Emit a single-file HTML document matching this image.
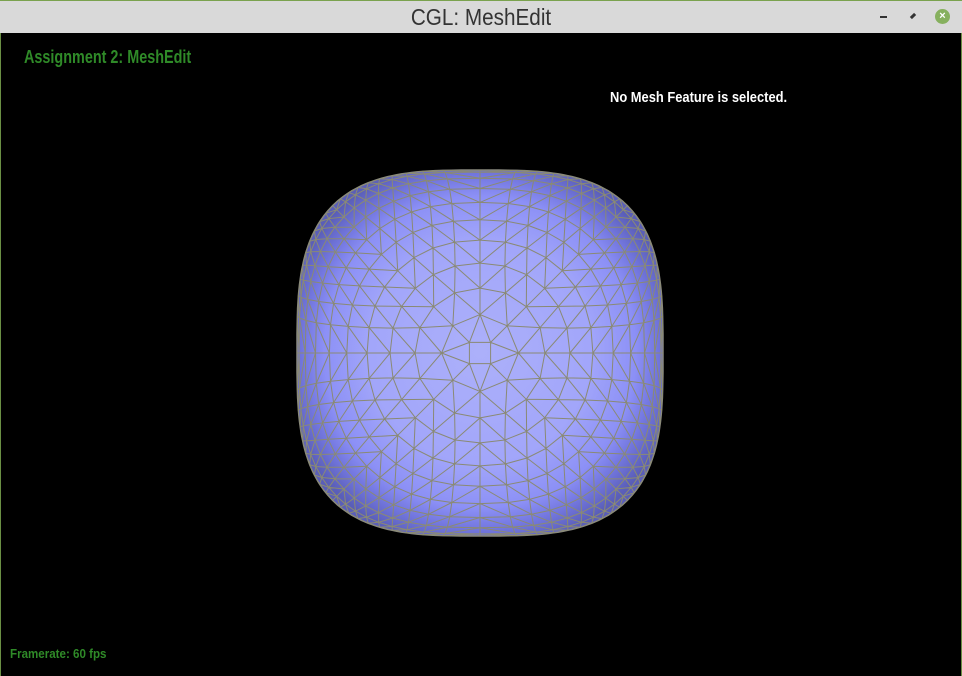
<!DOCTYPE html>
<html><head><meta charset="utf-8"><style>
body{margin:0;width:962px;height:676px;overflow:hidden;background:#000;font-family:"Liberation Sans",sans-serif;}
.tb{position:absolute;left:0;top:0;width:962px;height:33px;background:#d9d9d9;border-top:1px solid #7aa24e;box-sizing:border-box;}
.tb .t{position:absolute;left:0;right:0;top:3px;text-align:center;font-size:23px;color:#333;transform:scaleX(0.9)}
.frame{position:absolute;left:0;top:33px;width:962px;height:643px;border-left:1px solid #6a8f44;border-right:1px solid #6a8f44;box-sizing:border-box}
.g{position:absolute;color:#2f8a28;font-weight:bold;transform-origin:0 0;white-space:nowrap}
</style></head><body>
<div class="tb"><div class="t">CGL: MeshEdit</div>
<div style="position:absolute;left:880px;top:15px;width:7px;height:2px;background:#333"></div>
<div style="position:absolute;left:910px;top:12px;width:6px;height:6px;background:#333;transform:rotate(45deg) scaleX(0.5)"></div>
<div style="position:absolute;left:935px;top:8px;width:15px;height:15px;border-radius:50%;background:#86b05e;color:#fff;font-size:11px;font-weight:bold;text-align:center;line-height:15px">×</div>
</div>
<div class="frame"></div>
<div class="g" style="left:24px;top:47px;font-size:18px;transform:scaleX(0.8)">Assignment 2: MeshEdit</div>
<div class="g" style="left:610px;top:89px;color:#fff;font-size:15px;transform:scaleX(0.86)">No Mesh Feature is selected.</div>
<div class="g" style="left:10px;top:646px;font-size:13px;transform:scaleX(0.89)">Framerate: 60 fps</div>
<svg id="s" width="962" height="676" style="position:absolute;left:0;top:0">
<defs><radialGradient id="rg" cx="480" cy="352" r="200" gradientUnits="userSpaceOnUse">
<stop offset="0" stop-color="#acb0fa"/><stop offset="0.55" stop-color="#a2a6fa"/><stop offset="0.78" stop-color="#8c90f6"/><stop offset="0.88" stop-color="#7478e0"/><stop offset="1" stop-color="#5a5eb8"/></radialGradient></defs>
<g id="m"></g>
</svg>
<script>
(function(){
var cx=480,cy=353,R=183,N=10;
function pt(r,t,n){var c=Math.cos(t),s=Math.sin(t);
return [cx+r*Math.sign(c)*Math.pow(Math.abs(c),2/n),cy+r*Math.sign(s)*Math.pow(Math.abs(s),2/n)];}
var out='';
var d='';for(var i=0;i<=240;i++){var p=pt(R,i/240*2*Math.PI,3.2);d+=(i?'L':'M')+p[0].toFixed(1)+' '+p[1].toFixed(1);}
out+='<path d="'+d+'Z" fill="url(#rg)" stroke="#888" stroke-width="1.5"/>';
var rings=[];
var sq=[];for(var j=0;j<4;j++)sq.push(pt(15,Math.PI/4+j*Math.PI/2,2));rings.push(sq);
for(var k=1;k<=N;k++){var m=8*k;var r=R*Math.sin((k+0.4)*Math.PI/2/(N+0.4));var n=2+1.2*(k/N)*(k/N);
var pts=[];for(var j=0;j<m;j++)pts.push(pt(r,j/m*2*Math.PI,n));rings.push(pts);}
function f(p){return p[0].toFixed(1)+' '+p[1].toFixed(1);}
var L='';
for(var k=0;k<rings.length;k++){var a=rings[k];
for(var j=0;j<a.length;j++){L+='M'+f(a[j])+'L'+f(a[(j+1)%a.length]);}
if(k>0){var b=rings[k-1],ma=a.length,mb=b.length;
for(var j=0;j<ma;j++){var pos=j/ma*mb+(k==1?-0.5:0);var lo=Math.floor(pos+1e-9),hi=Math.ceil(pos-1e-9);
L+='M'+f(a[j])+'L'+f(b[((lo%mb)+mb)%mb]);if(hi!=lo)L+='M'+f(a[j])+'L'+f(b[((hi%mb)+mb)%mb]);}}
}
out+='<path d="'+L+'" fill="none" stroke="#8a8a74" stroke-width="1"/>';
document.getElementById('m').innerHTML=out;
})();
</script>
</body></html>
